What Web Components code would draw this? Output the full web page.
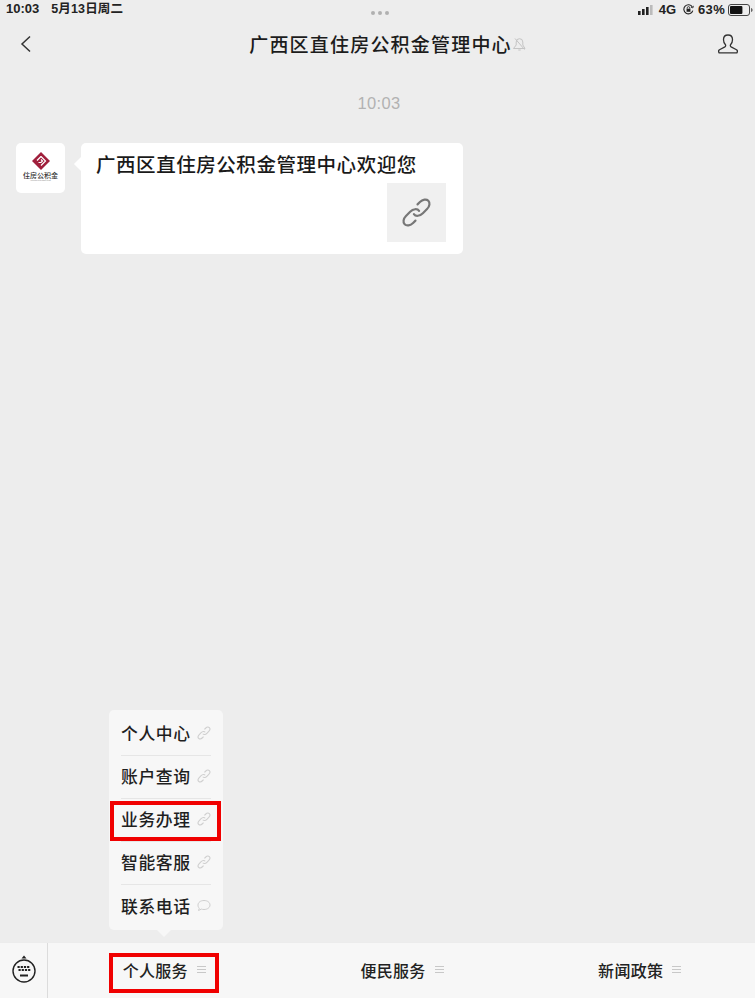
<!doctype html>
<html lang="zh"><head><meta charset="utf-8"><style>
html,body{margin:0;padding:0;height:100%}
body{font-family:"Noto Sans CJK SC","Liberation Sans",sans-serif;color:#1a1a1a;background:#ededed}
</style></head><body>
<chat-app>
  <status-bar slot="status"></status-bar>
  <chat-nav slot="nav" title-text="广西区直住房公积金管理中心"></chat-nav>
  <chat-stream slot="stream" time="10:03">
    <msg-bubble text="广西区直住房公积金管理中心欢迎您"></msg-bubble>
  </chat-stream>
  <menu-bar slot="menu">
    <menu-tab marked text="个人服务">
      <sub-menu slot="popup">
        <sub-item text="个人中心"></sub-item>
        <sub-item text="账户查询"></sub-item>
        <sub-item text="业务办理" marked></sub-item>
        <sub-item text="智能客服"></sub-item>
        <sub-item text="联系电话" icon="chat"></sub-item>
      </sub-menu>
    </menu-tab>
    <menu-tab text="便民服务"></menu-tab>
    <menu-tab text="新闻政策"></menu-tab>
  </menu-bar>
</chat-app>
<script>
const LINK='<g transform="translate(12 12) rotate(-45) scale(1.08 .78) rotate(45) translate(-12 -12)"><path vector-effect="non-scaling-stroke" d="M10 13a5 5 0 0 0 7.54.54l3-3a5 5 0 0 0-7.07-7.07l-1.72 1.71"/><path vector-effect="non-scaling-stroke" d="M14 11a5 5 0 0 0-7.54-.54l-3 3a5 5 0 0 0 7.07 7.07l1.71-1.71"/></g>';
function def(name,css,html){
  customElements.define(name,class extends HTMLElement{
    connectedCallback(){
      if(this.shadowRoot)return;
      const r=this.attachShadow({mode:'open'});
      r.innerHTML='<style>'+css+'</style>'+(typeof html==='function'?html(this):html);
    }
  });
}
def('chat-app',`:host{display:flex;flex-direction:column;height:998px;width:755px;overflow:hidden;background:#ededed}
::slotted([slot=stream]){flex:1}`,
`<slot name="status"></slot><slot name="nav"></slot><slot name="stream"></slot><slot name="menu"></slot>`);

def('status-bar',`:host{display:grid;grid-template-columns:1fr auto 1fr;align-items:center;height:20px;padding:0 2px 0 6px;font:600 13px/18px "Liberation Sans","Noto Sans CJK SC",sans-serif;color:#222;box-sizing:border-box}
.l{display:flex;gap:12px;align-items:center;padding-bottom:3px}.d{font-size:12.5px;letter-spacing:.15px}
.dots{display:flex;gap:3px;padding-top:4px}.dots i{width:4px;height:4px;border-radius:50%;background:#b0b0b0}
.r{display:flex;justify-content:flex-end;align-items:center;gap:5px;padding-bottom:2px;letter-spacing:.3px}
svg{display:block}`,
`<div class="l"><span>10:03</span><span class="d">5月13日周二</span></div>
<div class="dots"><i></i><i></i><i></i></div>
<div class="r"><svg width="16" height="10" viewBox="0 0 16 10"><rect x="0" y="6" width="2.6" height="4" fill="#222"/><rect x="4" y="4" width="2.6" height="6" fill="#222"/><rect x="8" y="2" width="2.6" height="8" fill="#222"/><rect x="12" y="0" width="2.6" height="10" fill="#bbb"/></svg>
<span style="letter-spacing:0">4G</span>
<svg style="margin-left:2px" width="11" height="11" viewBox="0 0 13 13" fill="none" stroke="#222"><path stroke-width="1.3" d="M11.6 7.8A5.4 5.4 0 1 1 11 3.4"/><path d="M12.3 2.2l-.6 2.4-2.3-.8" stroke-width="1"/><rect x="4.2" y="5.6" width="4.6" height="3.6" fill="#222" stroke="none"/><path stroke-width="1" d="M5 5.6V4.6a1.5 1.5 0 0 1 3 0v1"/></svg>
<span style="margin:0 -2px 0 -1px">63%</span>
<svg width="25" height="12" viewBox="0 0 25 12"><rect x=".5" y=".5" width="21" height="11" rx="2.5" fill="none" stroke="#444"/><rect x="2" y="2" width="12.4" height="8" rx="1" fill="#111"/><path d="M23 4v4c1-.3 1.6-1 1.6-2S24 4.300 23 4z" fill="#666"/></svg></div>`);

def('chat-nav',`:host{display:grid;grid-template-columns:50px 1fr 50px;align-items:center;height:50px;padding:0 17px 2px 20px;box-sizing:border-box}
.t{display:flex;justify-content:center;align-items:center;font-size:19px;font-weight:500;letter-spacing:1.2px;color:#1c1c1c;padding:0 0 2px 18px;white-space:nowrap;height:48px;box-sizing:border-box}
.t svg{flex:none}.p{justify-self:end}svg{display:block}`,
el=>`<svg width="11" height="18" viewBox="0 0 11 18" fill="none" stroke="#333" stroke-width="1.500"><path d="M10 1.500L2 9l8 7.500"/></svg>
<div class="t"><span>${el.getAttribute('title-text')}</span><svg width="15" height="15" viewBox="0 0 15 15" fill="none" stroke="#c4c4c4"><path d="M1.500 12.500h11.500L10.800 9V6a3.300 3.300 0 0 0-6.600 0v3zM6.300 14h2.400M3 2.500l9.500 11"/></svg></div>
<svg class="p" width="20" height="20" viewBox="0 0 20 20" fill="none" stroke="#333" stroke-width="1.300"><path d="M10 1c-2.800 0-4.500 2-4.500 4.800 0 2 .8 3.600 1.800 4.700.6.700.5 1.900-.4 2.400L1.500 15.800c-.8.500-1 2-.4 3h17.800c.6-1 .4-2.500-.4-3l-5.400-2.900c-.9-.5-1-1.700-.4-2.400 1-1.100 1.800-2.700 1.800-4.700C14.500 3 12.800 1 10 1z"/></svg>`);

def('chat-stream',`:host{display:block;padding:0 0 0 16px;min-height:0}
.time{text-align:center;color:#b2b2b2;font:16.500px/20px "Liberation Sans",sans-serif;padding:23px 13px 30px 0;letter-spacing:.3px}`,
el=>`<div class="time">${el.getAttribute('time')}</div><slot></slot>`);

def('msg-bubble',`:host{display:flex;gap:16px;align-items:flex-start}
.a{width:49px;height:50px;background:#fff;border-radius:5px;display:flex;flex-direction:column;align-items:center;padding-top:9px;box-sizing:border-box;flex:none}
.a b{font:500 7px/9px "Noto Sans CJK SC",sans-serif;color:#333;white-space:nowrap;margin-top:1px}
.a small{font:1.500px/2px "Liberation Sans",sans-serif;color:#888;white-space:nowrap}
.b{position:relative;width:382px;height:111px;background:#fff;border-radius:5px;box-sizing:border-box;padding:6px 17px 12px 15px;display:flex;flex-direction:column}
.b::before{content:"";position:absolute;left:-5px;top:16px;width:10px;height:10px;background:#fff;transform:rotate(45deg)}
.x{position:relative;font-size:19.500px;line-height:30px;font-weight:500;letter-spacing:.55px;color:#1a1a1a;white-space:nowrap;height:34px}
.th{align-self:flex-end;width:59px;height:59px;background:#f0f0f0;display:flex;align-items:center;justify-content:center}
svg{display:block}`,
el=>`<div class="a"><svg width="18" height="18" viewBox="0 0 18 18"><path d="M9 0l9 9-9 9-9-9z" fill="#a01f3c"/><path d="M9 4.500L13.500 9 9 13.500M9 7.500L10.500 9 9 10.500H6.500M9 4.500L5 8.500" fill="none" stroke="#fff" stroke-width="1.200"/></svg><b>住房公积金</b><small>HOUSING PROVIDENT FUND</small></div>
<div class="b"><div class="x">${el.getAttribute('text')}</div><div class="th"><svg width="31" height="31" viewBox="0 0 24 24" fill="none" stroke="#777" stroke-width="2.200" stroke-linecap="round">${LINK}</svg></div></div>`);

def('menu-bar',`:host{display:grid;grid-template-columns:48px 235.600px 239.800px 231.600px;height:56px;background:#f7f7f7;border-top:1px solid #ececec;box-sizing:border-box;flex:none}
.k{display:flex;align-items:center;justify-content:center;border-right:1px solid #dcdcdc;padding-bottom:1px}svg{display:block}`,
`<div class="k"><svg width="26" height="30" viewBox="0 0 26 30" fill="none" stroke="#222" stroke-width="1.400"><path d="M13 .5l2.500 3h-5z" fill="#222" stroke="none"/><circle cx="13" cy="16" r="11"/><g fill="#222" stroke="none"><rect x="6.500" y="11" width="2.200" height="2"/><rect x="9.700" y="11" width="2.200" height="2"/><rect x="12.900" y="11" width="2.200" height="2"/><rect x="16.100" y="11" width="2.200" height="2"/><rect x="7.500" y="14" width="2.200" height="2"/><rect x="10.700" y="14" width="2.200" height="2"/><rect x="13.900" y="14" width="2.200" height="2"/><rect x="17.100" y="14" width="2.200" height="2"/><rect x="9" y="19.500" width="8" height="2"/></g></svg></div><slot></slot>`);

def('menu-tab',`:host{display:flex;position:relative;align-items:center;justify-content:center;gap:9px;font-size:16px;font-weight:500;letter-spacing:.3px;color:#222;padding-right:3px;padding-bottom:2px;box-sizing:border-box}
:host(:last-child){padding-left:4px}
svg{display:block}
.m{position:absolute;left:61px;top:10px;width:110px;height:40px;border:4px solid #f00000;box-sizing:border-box;pointer-events:none}`,
el=>`<span>${el.getAttribute('text')}</span><svg width="9" height="9" viewBox="0 0 9 9" stroke="#c8c8c8" stroke-width="1"><path d="M0 1.500h9M0 4.500h9M0 7.500h9"/></svg>${el.hasAttribute('marked')?'<div class="m"></div>':''}<slot name="popup"></slot>`);

def('sub-menu',`:host{display:block;position:absolute;left:61px;bottom:68px;width:114px;background:#f7f7f7;border-radius:5px;padding:3px 0 2px;box-sizing:border-box}
:host::after{content:"";position:absolute;left:50px;bottom:-5px;width:10px;height:10px;background:#f7f7f7;transform:rotate(45deg)}
::slotted(sub-item:not(:last-child)){border-bottom:1px solid #e6e6e6}`,`<slot></slot>`);

def('sub-item',`:host{display:flex;position:relative;align-items:center;justify-content:space-between;height:43px;padding-bottom:2px;margin:0 12px;font-size:16.800px;font-weight:500;letter-spacing:.6px;color:#1f1f1f;box-sizing:border-box}
svg{display:block;flex:none}
.m{position:absolute;left:-11px;top:2px;width:111px;height:40px;border:4px solid #f00000;box-sizing:border-box}`,
el=>`<span>${el.getAttribute('text')}</span>`+(el.getAttribute('icon')==='chat'
?`<svg width="14" height="13" viewBox="0 0 14 13" fill="none" stroke="#cfcfcf"><path d="M7 1.500c3.400 0 6 1.900 6 4.500s-2.600 4.500-6 4.500c-1 0-1.800-.1-2.600-.4L1.500 11.500l.8-2.300C1.300 8.400 1 7.300 1 6c0-2.600 2.600-4.500 6-4.500z"/></svg>`
:`<svg width="14" height="14" viewBox="0 0 24 24" fill="none" stroke="#cfcfcf" stroke-width="1.100">${LINK}</svg>`)+(el.hasAttribute('marked')?'<div class="m"></div>':''));
</script>
</body></html>
